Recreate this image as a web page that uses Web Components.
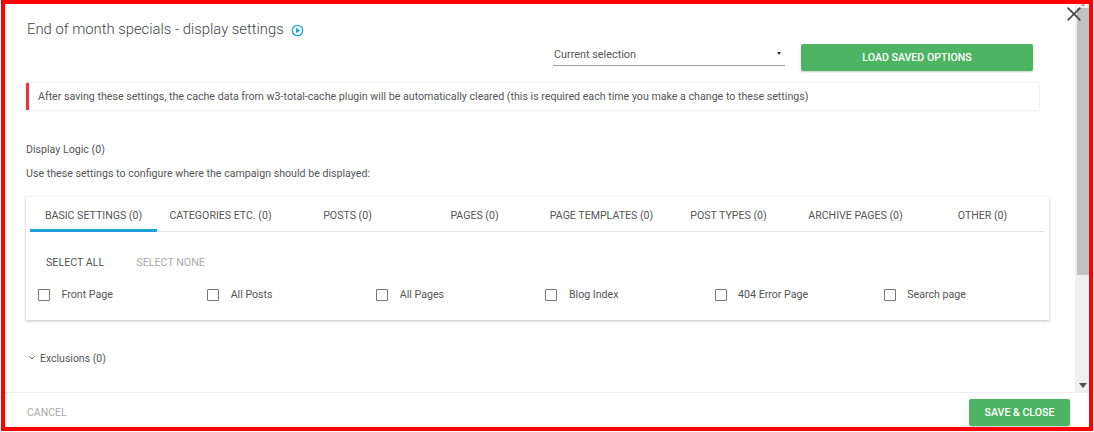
<!DOCTYPE html>
<html>
<head>
<meta charset="utf-8">
<style>
  html, body { margin: 0; height: 100%; overflow: hidden; background: #fff; }
  body { font-family: Roboto, "Liberation Sans", sans-serif; color: #555; }
</style>
</head>
<body>
<settings-modal>
  <modal-header slot="top" heading="End of month specials - display settings"></modal-header>
  <notice-bar>After saving these settings, the cache data from w3-total-cache plugin will be automatically cleared (this is required each time you make a change to these settings)</notice-bar>
  <logic-intro></logic-intro>
  <settings-tabs></settings-tabs>
  <exclusions-row></exclusions-row>
</settings-modal>

<script>
class SettingsModal extends HTMLElement {
  constructor() {
    super();
    this.attachShadow({ mode: "open" });
    this.shadowRoot.innerHTML = `
      <style>
        :host {
          display: flex;
          flex-direction: column;
          position: relative;
          width: 1092px;
          height: 431px;
          margin-left: 1px;
          box-sizing: border-box;
          border: 4px solid #f00;
          background: #fff;
        }
        .middle { display: flex; height: 388px; flex: none; }
        .scroll { flex: 1; min-width: 0; padding: 0 0 0 21px; }
        .bar {
          width: 14px;
          flex: none;
          display: flex;
          flex-direction: column;
          align-items: flex-end;
          background: #f0f0f0;
        }
        .bar .cap { width: 12px; height: 4px; flex: none; display: flex; justify-content: center; }
        .bar .arrow { width: 13px; height: 13px; flex: none; display: flex; align-items: center; justify-content: center; }
        .bar .thumb { width: 12px; height: 267px; flex: none; background: #c1c1c1; }
        .bar .rest { flex: 1; }
        .footer {
          flex: 1;
          display: flex;
          justify-content: space-between;
          border-top: 1px solid #eee;
          padding: 6px 19px 0 22px;
        }
        .cancel { font-size: 10.5px; color: #aaa; line-height: 12px; margin-top: 8px; }
        .save {
          width: 101px;
          height: 27px;
          display: flex;
          align-items: center;
          justify-content: center;
          background: #4cb462;
          border-radius: 2px;
          color: #fff;
          font-size: 10.6px;
          font-weight: 500;
          box-shadow: 0 1px 2px rgba(0,0,0,.2);
        }
        .close { position: absolute; top: 3px; left: 1062px; width: 14px; height: 14px; }
      </style>
      <div class="middle">
        <div class="scroll"><slot name="top"></slot><slot></slot></div>
        <div class="bar">
          <div class="cap"><svg width="8" height="2"><path d="M2 2L3 0H5L6 2Z" fill="#aaa"/></svg></div>
          <div class="thumb"></div>
          <div class="rest"></div>
          <div class="arrow"><svg width="8" height="5"><path d="M0 0H8L4 5Z" fill="#505050"/></svg></div>
        </div>
      </div>
      <div class="footer">
        <span class="cancel">CANCEL</span>
        <span class="save">SAVE &amp; CLOSE</span>
      </div>
      <svg class="close" viewBox="0 0 14 14"><path d="M0.6 0.6L13.4 13.4M13.4 0.6L0.6 13.4" stroke="#444" stroke-width="1.6" fill="none"/></svg>
    `;
  }
}

class ModalHeader extends HTMLElement {
  constructor() {
    super();
    this.attachShadow({ mode: "open" });
  }

  connectedCallback() {
    this.shadowRoot.innerHTML = `
      <style>
        :host { display: block; padding: 13px 42px 0 1px; height: 64px; box-sizing: border-box; }
        .title { display: flex; align-items: center; gap: 7px; height: 24px; font-size: 14.8px; font-weight: 300; color: #444; }
        svg { margin-top: 2px; }
        .row { display: flex; justify-content: flex-end; gap: 16px; margin-top: 3px; }
        .select {
          width: 232px;
          height: 22px;
          box-sizing: border-box;
          border-bottom: 1px solid #9e9e9e;
          display: flex;
          align-items: flex-start;
          justify-content: space-between;
          font-size: 10.85px;
          padding: 4px 0 0 1px;
        }
        .caret { width: 0; height: 0; border: 2.5px solid transparent; border-top: 3px solid #333; margin: 4px 4px 0 0; }
        .load {
          width: 232px;
          height: 27px;
          display: flex;
          align-items: center;
          justify-content: center;
          background: #4cb462;
          border-radius: 2px;
          color: #fff;
          font-size: 10.6px;
          font-weight: 500;
          box-shadow: 0 1px 2px rgba(0,0,0,.2);
        }
      </style>
      <div class="title">
        <span>${this.getAttribute("heading")}</span>
        <svg width="13" height="13" viewBox="0 0 13 13"><circle cx="6.5" cy="6.5" r="5.2" fill="none" stroke="#1c9fe0" stroke-width="1.3"/><path d="M5 3.8L9.2 6.5L5 9.2Z" fill="#1c9fe0"/></svg>
      </div>
      <div class="row">
        <div class="select"><span>Current selection</span><i class="caret"></i></div>
        <div class="load">LOAD SAVED OPTIONS</div>
      </div>
    `;
  }
}

class NoticeBar extends HTMLElement {
  constructor() {
    super();
    this.attachShadow({ mode: "open" });
    this.shadowRoot.innerHTML = `
      <style>
        :host {
          display: block;
          width: 1013px;
          height: 27px;
          box-sizing: border-box;
          margin-top: 15px;
          border-left: 3px solid #e03a3a;
          padding-left: 9px;
          line-height: 27px;
          font-size: 10.65px;
          box-shadow: 0 0 2px rgba(0,0,0,.16);
          white-space: nowrap;
        }
      </style>
      <slot></slot>
    `;
  }
}

class LogicIntro extends HTMLElement {
  constructor() {
    super();
    this.attachShadow({ mode: "open" });
    this.shadowRoot.innerHTML = `
      <style>
        :host { display: block; font-size: 10.65px; padding-top: 28px; height: 87px; box-sizing: border-box; }
        div { height: 24px; line-height: 24px; }
      </style>
      <div>Display Logic (0)</div>
      <div>Use these settings to configure where the campaign should be displayed:</div>
    `;
  }
}

class SettingsTabs extends HTMLElement {
  constructor() {
    super();
    this.attachShadow({ mode: "open" });
    const tabs = ["BASIC SETTINGS (0)", "CATEGORIES ETC. (0)", "POSTS (0)", "PAGES (0)",
      "PAGE TEMPLATES (0)", "POST TYPES (0)", "ARCHIVE PAGES (0)", "OTHER (0)"];
    const boxes = ["Front Page", "All Posts", "All Pages", "Blog Index", "404 Error Page", "Search page"];
    this.shadowRoot.innerHTML = `
      <style>
        :host {
          display: block;
          width: 1023px;
          height: 123px;
          box-sizing: border-box;
          padding: 0 4px;
          box-shadow: 0 1px 3px rgba(0,0,0,.25);
          font-size: 10.6px;
        }
        .tabs { display: flex; height: 35px; border-bottom: 1px solid #e4e4e4; box-sizing: border-box; }
        .tab { width: 127px; flex: none; text-align: center; line-height: 38px; white-space: nowrap; }
        .tab.on { box-shadow: 0 1px 0 #1e9fdc, inset 0 -2px 0 #1e9fdc; height: 34px; }
        .actions { display: flex; gap: 32px; padding: 23px 0 0 16px; height: 23px; line-height: 15px; font-size: 10.7px; }
        .off { color: #aaa; }
        .boxes { display: flex; padding: 9px 0 0 8px; font-size: 10.65px; }
        .box { width: 169.15px; flex: none; display: flex; gap: 11.5px; }
        .box i { width: 10px; height: 10px; border: 1px solid #777; border-radius: 1px; margin-top: 2px; flex: none; }
        .box span { margin-top: 1px; }
      </style>
      <div class="tabs">${tabs.map((t, i) => `<div class="tab${i ? "" : " on"}">${t}</div>`).join("")}</div>
      <div class="actions"><span>SELECT ALL</span><span class="off">SELECT NONE</span></div>
      <div class="boxes">${boxes.map(b => `<label class="box"><i></i><span>${b}</span></label>`).join("")}</div>
    `;
  }
}

class ExclusionsRow extends HTMLElement {
  constructor() {
    super();
    this.attachShadow({ mode: "open" });
    this.shadowRoot.innerHTML = `
      <style>
        :host { display: flex; align-items: center; gap: 5px; margin-top: 31px; padding-left: 3px; font-size: 10.5px; height: 14px; }
      </style>
      <svg width="6" height="4" viewBox="0 0 6 4"><path d="M0.5 0.5L3 3L5.5 0.5" fill="none" stroke="#666"/></svg>
      <span>Exclusions (0)</span>
    `;
  }
}

customElements.define("settings-modal", SettingsModal);
customElements.define("modal-header", ModalHeader);
customElements.define("notice-bar", NoticeBar);
customElements.define("logic-intro", LogicIntro);
customElements.define("settings-tabs", SettingsTabs);
customElements.define("exclusions-row", ExclusionsRow);
</script>
</body>
</html>
